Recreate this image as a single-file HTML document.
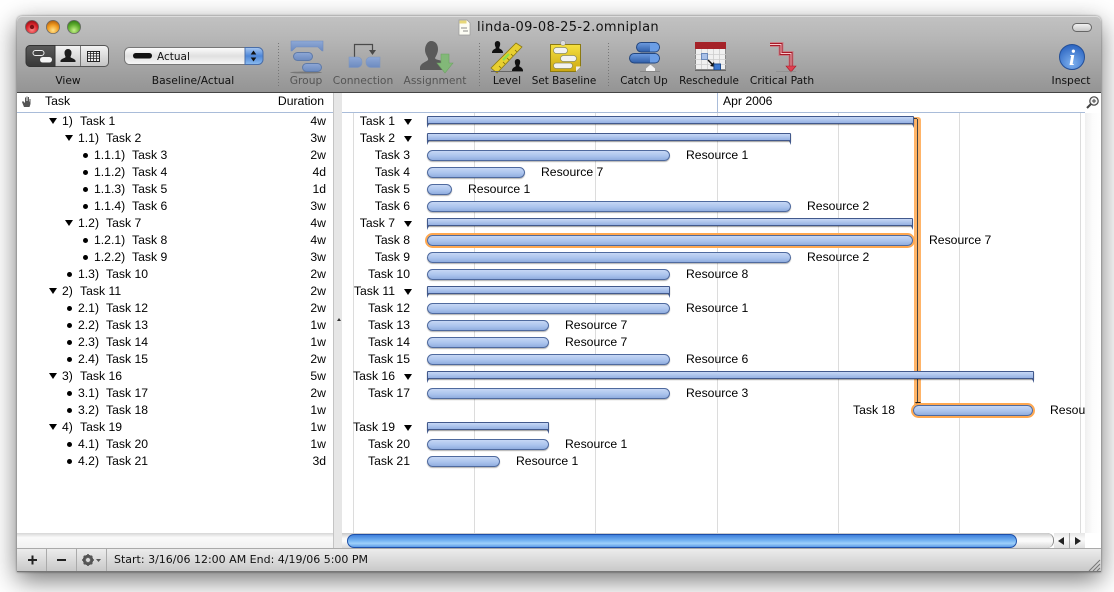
<!DOCTYPE html>
<html><head><meta charset="utf-8"><style>
html,body{margin:0;padding:0;width:1114px;height:592px;overflow:hidden;background:#fff}
body{position:relative;font-family:"Liberation Sans",sans-serif;font-size:12.2px;color:#000}
div,span{position:absolute;white-space:nowrap}
#win{left:17px;top:16px;width:1084px;height:556px;border-radius:5px 5px 0 0;box-shadow:0 8px 26px rgba(0,0,0,.55),0 0 2px rgba(0,0,0,.5)}
#tb{left:17px;top:16px;width:1084px;height:76px;background:linear-gradient(#c2c2c2,#b6b6b6 30%,#949494);border-radius:5px 5px 0 0;box-shadow:inset 0 1px 0 #ddd}
.tl{font-family:"DejaVu Sans",sans-serif;font-size:10.7px;height:12px;line-height:12px;top:75px;transform:translateX(-50%);color:#111}
.d{color:#555}
.n{font-size:10.4px}
#line{left:17px;top:92px;width:1084px;height:1px;background:#444}
#left{left:17px;top:93px;width:316px;height:440px;background:#fff}
#split{left:333px;top:93px;width:9px;height:455px;background:#e6e6e6;border-left:1px solid #c4c4c4;box-sizing:border-box}
#right{left:342px;top:93px;width:759px;height:440px;background:#fff;overflow:hidden}
.hl{top:112px;height:1px;background:#a9bcd9}
.v{top:113px;width:1px;height:420px;background:#dcdcdc}
.r{height:14px;line-height:14px}
.tr{width:0;height:0;border-left:4px solid transparent;border-right:4px solid transparent;border-top:6px solid #000;margin-top:1px}
.b{width:5px;height:5px;border-radius:50%;background:#000}
.dur{right:788px;text-align:right}
.lab{right:704px;text-align:right}
.bar{height:11px;box-sizing:border-box;border:1px solid #4f6a9e;border-radius:6px;background:linear-gradient(#c6d7f5,#a9c2ec 60%,#90addf);box-shadow:0 1px 1px rgba(0,0,0,.3)}
.g{height:8px;box-sizing:border-box;border:1px solid #42598c;border-radius:1px 1px 0 0;background:linear-gradient(#c6d7f5,#96b2e3);box-shadow:0 1px 1px rgba(0,0,0,.4)}
.cl,.cr{top:7px;width:0;height:0;border-top:4px solid #42598c}
.cl{left:-1px;border-right:2px solid transparent}
.cr{right:-1px;border-left:2px solid transparent}
.hi{box-shadow:0 0 0 2px #ffa850}
#sb{left:17px;top:533px;width:316px;height:15px;background:linear-gradient(#d6d6d6,#fafafa 30%,#f2f2f2)}
#st{left:17px;top:548px;width:1084px;height:24px;box-sizing:border-box;background:linear-gradient(#ececec,#c9c9c9);border-top:1px solid #aaa;border-bottom:1px solid #777}
.sep{top:549px;width:1px;height:22px;background:#aaa}
</style></head><body>
<div id="win"></div>
<div id="tb"></div>
<div id="line"></div>
<div id="left"></div>
<div id="right"></div>
<div id="split"></div>

<div style="left:477px;top:20px;height:15px;line-height:15px;font-family:'DejaVu Sans',sans-serif;font-size:13px;color:#111;letter-spacing:.36px">linda-09-08-25-2.omniplan</div>

<div class="tl" style="left:68px">View</div>
<div class="tl" style="left:193px">Baseline/Actual</div>
<div class="tl d" style="left:306px">Group</div>
<div class="tl d" style="left:363px">Connection</div>
<div class="tl d" style="left:435px">Assignment</div>
<div class="tl" style="left:507px">Level</div>
<div class="tl n" style="left:564px">Set Baseline</div>
<div class="tl n" style="left:644px">Catch Up</div>
<div class="tl n" style="left:709px">Reschedule</div>
<div class="tl" style="left:782px">Critical Path</div>
<div class="tl" style="left:1071px">Inspect</div>

<svg style="position:absolute;left:0;top:0" width="1114" height="93" viewBox="0 0 1114 93">
<defs>
<radialGradient id="red" cx=".5" cy=".7" r=".7"><stop offset="0" stop-color="#ff8a8a"/><stop offset=".6" stop-color="#d8222a"/><stop offset="1" stop-color="#8c1015"/></radialGradient>
<radialGradient id="yel" cx=".5" cy=".75" r=".7"><stop offset="0" stop-color="#ffe28a"/><stop offset=".6" stop-color="#f09a20"/><stop offset="1" stop-color="#b86510"/></radialGradient>
<radialGradient id="grn" cx=".5" cy=".75" r=".7"><stop offset="0" stop-color="#c6f08a"/><stop offset=".6" stop-color="#62b030"/><stop offset="1" stop-color="#37801a"/></radialGradient>
<linearGradient id="seg" x1="0" y1="0" x2="0" y2="1"><stop offset="0" stop-color="#f4f4f4"/><stop offset="1" stop-color="#c4c4c4"/></linearGradient>
<linearGradient id="segd" x1="0" y1="0" x2="0" y2="1"><stop offset="0" stop-color="#5a5a5a"/><stop offset="1" stop-color="#383838"/></linearGradient>
<linearGradient id="pop" x1="0" y1="0" x2="0" y2="1"><stop offset="0" stop-color="#fdfdfd"/><stop offset=".5" stop-color="#e0e0e0"/><stop offset="1" stop-color="#f8f8f8"/></linearGradient>
<linearGradient id="popb" x1="0" y1="0" x2="0" y2="1"><stop offset="0" stop-color="#a9c9f2"/><stop offset=".5" stop-color="#4d86d8"/><stop offset="1" stop-color="#8cbcf0"/></linearGradient>
<linearGradient id="gb" x1="0" y1="0" x2="0" y2="1"><stop offset="0" stop-color="#8ea8d6"/><stop offset="1" stop-color="#6c8ac0"/></linearGradient>
<linearGradient id="yl" x1="0" y1="0" x2="0" y2="1"><stop offset="0" stop-color="#f6e040"/><stop offset="1" stop-color="#cca812"/></linearGradient>
<linearGradient id="cu" x1="0" y1="0" x2="0" y2="1"><stop offset="0" stop-color="#6d9be0"/><stop offset="1" stop-color="#2f5ea8"/></linearGradient>
<radialGradient id="ib" cx=".5" cy=".75" r=".75"><stop offset="0" stop-color="#7fb2f0"/><stop offset="1" stop-color="#2a63c0"/></radialGradient>
</defs>
<circle cx="32" cy="27" r="6.600" fill="url(#red)" stroke="#6b6b6b" stroke-width=".8"/><circle cx="32" cy="27" r="2.200" fill="#7d1015"/>
<circle cx="53" cy="27" r="6.600" fill="url(#yel)" stroke="#6b6b6b" stroke-width=".8"/>
<circle cx="74" cy="27" r="6.600" fill="url(#grn)" stroke="#6b6b6b" stroke-width=".8"/>
<path d="M459 20h8l3 3v12h-11z" fill="#fdfdf4" stroke="#999" stroke-width=".7"/><rect x="459.500" y="20.500" width="7" height="3" fill="#e8d878"/><path d="M461 28h6M463 31h5" stroke="#666" stroke-width=".8"/>
<rect x="1072.500" y="23.500" width="19" height="8" rx="4" fill="url(#seg)" stroke="#666"/>
<rect x="26.500" y="45.500" width="82" height="21" rx="4" fill="url(#seg)" stroke="#555"/>
<path d="M55 45.500H30a4 4 0 0 0-4 4v13a4 4 0 0 0 4 4h25z" fill="url(#segd)" stroke="#333"/>
<path d="M80.500 46v20" stroke="#777"/>
<rect x="33" y="50.500" width="11" height="5" rx="2.500" fill="#444" stroke="#eee"/>
<rect x="40" y="57" width="12" height="5.500" rx="2.700" fill="#f4f4f4"/>
<path d="M68 49a3.500 3.500 0 0 1 3.500 4c0 2-1 3-1 4s4 1.500 5 3.500v1.500H60.500v-1.500c1-2 5-2.500 5-3.500s-1-2-1-4a3.500 3.500 0 0 1 3.500-4z" fill="#1c1c1c"/>
<rect x="87.500" y="51.500" width="12" height="10" fill="#f2f2f2" stroke="#222"/>
<path d="M87.500 53.500h12M87.500 56h12M87.500 58.500h12M90.500 51.500v10M93.500 51.500v10M96.500 51.500v10" stroke="#222" stroke-width=".8"/>
<rect x="124.500" y="47.500" width="138" height="17" rx="5" fill="url(#pop)" stroke="#777"/>
<path d="M245 47.500h13a5 5 0 0 1 5 5v7a5 5 0 0 1-5 5h-13z" fill="url(#popb)" stroke="#4a6ea8"/>
<path d="M253.500 50.500l-2.800 4h5.600zM253.500 61.500l-2.800-4h5.600z" fill="#111"/>
<rect x="133" y="53" width="19" height="5.500" rx="2.700" fill="#111"/>
<text x="157" y="60" font-family="'DejaVu Sans',sans-serif" font-size="10.500" fill="#111">Actual</text>
<path d="M278.500 43v43M479.500 43v43M608.500 43v43" stroke="#777" stroke-dasharray="1 2"/>
<ellipse cx="306" cy="72.500" rx="16" ry="1" fill="#777"/>
<path d="M291 41h32v10h-1l-4-4h-22l-4 4h-1z" fill="url(#gb)" stroke="#6f8cc0" stroke-width=".6"/>
<rect x="293.500" y="52.500" width="19" height="8" rx="4" fill="url(#gb)" stroke="#5f7aa8"/>
<rect x="302.500" y="63.500" width="19" height="8" rx="4" fill="url(#gb)" stroke="#5f7aa8"/>
<path d="M354.500 57V44.500H372.500V50" fill="none" stroke="#4a4a4a" stroke-width="1.200"/>
<path d="M369 50h7l-3.500 5z" fill="#4a4a4a"/>
<path d="M349 57h9a4.500 4.500 0 0 1 4 5a5 5 0 0 1-4 5.500h-9z" fill="url(#gb)" stroke="#7f96bd" stroke-width=".6"/>
<path d="M380 57h-9a4.500 4.500 0 0 0-5 5a5 5 0 0 0 5 5.500h9z" fill="url(#gb)" stroke="#7f96bd" stroke-width=".6"/>
<path d="M431 41c5 0 7 4 7 8s-2 7-3 9c0 2 6 2 10 4v8h-25v-3c1-4 6-5 8-7 1-2-3-5-3-10 0-5 3-9 6-9z" fill="#5a5a5a"/>
<path d="M441 54h8v9h4l-8 10-8-10h4z" fill="#82b878" stroke="#6da262" stroke-width=".6"/>
<path d="M491 68L516 43l6 4-25 26z" fill="#e8cf30" stroke="#8c7a10" stroke-width=".8"/>
<path d="M499 66l2 2M503 62l2 2M507 58l2 2M511 54l2 2M515 50l2 2" stroke="#7a6a10" stroke-width=".8"/>
<path d="M503 60l6-6" stroke="#8fe04a" stroke-width="2.500"/>
<path d="M497.500 41a2.700 2.700 0 0 1 2.700 3c0 2-1 3-1 4s3 1 3.800 4v1h-11v-1c.8-3 3.800-3 3.800-4s-1-2-1-4a2.700 2.700 0 0 1 2.700-3z" fill="#111"/>
<path d="M517.500 59a2.700 2.700 0 0 1 2.700 3c0 2-1 3-1 4s3 1 3.800 4v1h-11v-1c.8-3 3.800-3 3.800-4s-1-2-1-4a2.700 2.700 0 0 1 2.700-3z" fill="#111"/>
<path d="M491 71.500h32" stroke="#666" stroke-width="1"/>
<path d="M550.500 44.500h30v22l-5 5h-25z" fill="url(#yl)" stroke="#8c7a10"/>
<path d="M581 66.500l-5 5v-5z" fill="#eee"/>
<circle cx="563" cy="43" r="2.500" fill="#ddd" stroke="#888" stroke-width=".5"/>
<rect x="553.500" y="47.500" width="14" height="6" rx="3" fill="#f2f2f2" stroke="#8a8a60" stroke-width=".7"/>
<rect x="560.500" y="55.500" width="16" height="6" rx="3" fill="#f2f2f2" stroke="#8a8a60" stroke-width=".7"/>
<rect x="553.500" y="63" width="19" height="5.500" rx="2.700" fill="#f2f2f2" stroke="#8a8a60" stroke-width=".7"/>
<rect x="636.500" y="42.500" width="23" height="9.500" rx="4.700" fill="url(#cu)" stroke="#23467e"/>
<path d="M650 43h5a4 4 0 0 1 4 4.500 4 4 0 0 1-4 4h-5z" fill="#6b9ee6"/>
<rect x="629.500" y="53.500" width="30" height="9.500" rx="4.700" fill="url(#cu)" stroke="#23467e"/>
<path d="M650 54h5a4 4 0 0 1 4 4.500 4 4 0 0 1-4 4h-5z" fill="#6b9ee6"/>
<path d="M646 71v-2.500l4-3.500h1l4 3.500V71z" fill="#f4f4f4"/>
<path d="M640 71.500h20" stroke="#888"/>
<rect x="695.500" y="42.500" width="30" height="27" fill="#f0f0f0" stroke="#888"/>
<rect x="695" y="42" width="31" height="7" fill="#a52228"/>
<path d="M695 54.500h31M695 59.500h31M695 64.500h31M701.500 49v20M707.500 49v20M713.500 49v20M719.500 49v20" stroke="#ccc" stroke-width=".8"/>
<rect x="701.500" y="53.500" width="6" height="6" fill="#a8c0e8" stroke="#6a88b8"/>
<path d="M708 60l6 6" stroke="#111" stroke-width="1.500"/><path d="M715 67l-5-1 4-4z" fill="#111"/>
<rect x="714" y="64" width="6.500" height="6" fill="#3b78d0" stroke="#1f4c90"/>
<path d="M695 70.500h31" stroke="#666"/>
<path d="M770 44.500h11v9h10V68" fill="none" stroke="#e05060" stroke-opacity=".5" stroke-width="5"/>
<path d="M770 44.500h11v9h10V68" fill="none" stroke="#a81a28" stroke-width="3"/>
<path d="M770 44.500h11v9h10V67" fill="none" stroke="#f5c8cc" stroke-width="1"/>
<path d="M786 66h10l-5 6z" fill="#e04050" stroke="#a81a28" stroke-width=".6"/>
<path d="M776 71.500h20" stroke="#888" stroke-opacity=".6"/>
<circle cx="1072" cy="57" r="12.500" fill="url(#ib)" stroke="#234f98"/>
<text x="1072" y="65" text-anchor="middle" font-family="'Liberation Serif',serif" font-style="italic" font-weight="bold" font-size="22" fill="#fff">i</text>
</svg>

<svg style="position:absolute;left:21px;top:95px" width="13" height="13" viewBox="0 0 13 13"><path d="M3 12L1 7l1-1 2 2V2.500h1V6h.5V1.500h1V6H7V2h1v4.500h.5V4h1v5l-1 3z" fill="#555"/></svg>
<div class="r" style="left:45px;top:94px">Task</div>
<div class="r" style="right:790px;top:94px">Duration</div>
<div class="hl" style="left:17px;width:316px"></div>
<div class="hl" style="left:342px;width:743px"></div>
<div style="left:717px;top:93px;width:1px;height:19px;background:#a9bcd9"></div>
<div class="r" style="left:723px;top:94px">Apr 2006</div>
<svg style="position:absolute;left:1086px;top:95px" width="14" height="14" viewBox="0 0 14 14"><circle cx="8" cy="6" r="4.200" fill="#f4f4f4" stroke="#444" stroke-width="1.200"/><path d="M5 9l-4 4" stroke="#444" stroke-width="2"/><path d="M6 6h4M8 4v4" stroke="#444"/></svg>

<div class="v" style="left:353px"></div><div class="v" style="left:474px"></div><div class="v" style="left:595px"></div><div class="v" style="left:717px"></div><div class="v" style="left:838px"></div><div class="v" style="left:959px"></div><div class="v" style="left:1080px"></div>

<div class="tr" style="left:49px;top:117px"></div><div class="r" style="left:62px;top:114px">1)</div><div class="r" style="left:80px;top:114px">Task 1</div><div class="r dur" style="top:114px">4w</div>
<div class="tr" style="left:65px;top:134px"></div><div class="r" style="left:78px;top:131px">1.1)</div><div class="r" style="left:106px;top:131px">Task 2</div><div class="r dur" style="top:131px">3w</div>
<div class="b" style="left:83px;top:153px"></div><div class="r" style="left:94px;top:148px">1.1.1)</div><div class="r" style="left:132px;top:148px">Task 3</div><div class="r dur" style="top:148px">2w</div>
<div class="b" style="left:83px;top:170px"></div><div class="r" style="left:94px;top:165px">1.1.2)</div><div class="r" style="left:132px;top:165px">Task 4</div><div class="r dur" style="top:165px">4d</div>
<div class="b" style="left:83px;top:187px"></div><div class="r" style="left:94px;top:182px">1.1.3)</div><div class="r" style="left:132px;top:182px">Task 5</div><div class="r dur" style="top:182px">1d</div>
<div class="b" style="left:83px;top:204px"></div><div class="r" style="left:94px;top:199px">1.1.4)</div><div class="r" style="left:132px;top:199px">Task 6</div><div class="r dur" style="top:199px">3w</div>
<div class="tr" style="left:65px;top:219px"></div><div class="r" style="left:78px;top:216px">1.2)</div><div class="r" style="left:106px;top:216px">Task 7</div><div class="r dur" style="top:216px">4w</div>
<div class="b" style="left:83px;top:238px"></div><div class="r" style="left:94px;top:233px">1.2.1)</div><div class="r" style="left:132px;top:233px">Task 8</div><div class="r dur" style="top:233px">4w</div>
<div class="b" style="left:83px;top:255px"></div><div class="r" style="left:94px;top:250px">1.2.2)</div><div class="r" style="left:132px;top:250px">Task 9</div><div class="r dur" style="top:250px">3w</div>
<div class="b" style="left:67px;top:272px"></div><div class="r" style="left:78px;top:267px">1.3)</div><div class="r" style="left:106px;top:267px">Task 10</div><div class="r dur" style="top:267px">2w</div>
<div class="tr" style="left:49px;top:287px"></div><div class="r" style="left:62px;top:284px">2)</div><div class="r" style="left:80px;top:284px">Task 11</div><div class="r dur" style="top:284px">2w</div>
<div class="b" style="left:67px;top:306px"></div><div class="r" style="left:78px;top:301px">2.1)</div><div class="r" style="left:106px;top:301px">Task 12</div><div class="r dur" style="top:301px">2w</div>
<div class="b" style="left:67px;top:323px"></div><div class="r" style="left:78px;top:318px">2.2)</div><div class="r" style="left:106px;top:318px">Task 13</div><div class="r dur" style="top:318px">1w</div>
<div class="b" style="left:67px;top:340px"></div><div class="r" style="left:78px;top:335px">2.3)</div><div class="r" style="left:106px;top:335px">Task 14</div><div class="r dur" style="top:335px">1w</div>
<div class="b" style="left:67px;top:357px"></div><div class="r" style="left:78px;top:352px">2.4)</div><div class="r" style="left:106px;top:352px">Task 15</div><div class="r dur" style="top:352px">2w</div>
<div class="tr" style="left:49px;top:372px"></div><div class="r" style="left:62px;top:369px">3)</div><div class="r" style="left:80px;top:369px">Task 16</div><div class="r dur" style="top:369px">5w</div>
<div class="b" style="left:67px;top:391px"></div><div class="r" style="left:78px;top:386px">3.1)</div><div class="r" style="left:106px;top:386px">Task 17</div><div class="r dur" style="top:386px">2w</div>
<div class="b" style="left:67px;top:408px"></div><div class="r" style="left:78px;top:403px">3.2)</div><div class="r" style="left:106px;top:403px">Task 18</div><div class="r dur" style="top:403px">1w</div>
<div class="tr" style="left:49px;top:423px"></div><div class="r" style="left:62px;top:420px">4)</div><div class="r" style="left:80px;top:420px">Task 19</div><div class="r dur" style="top:420px">1w</div>
<div class="b" style="left:67px;top:442px"></div><div class="r" style="left:78px;top:437px">4.1)</div><div class="r" style="left:106px;top:437px">Task 20</div><div class="r dur" style="top:437px">1w</div>
<div class="b" style="left:67px;top:459px"></div><div class="r" style="left:78px;top:454px">4.2)</div><div class="r" style="left:106px;top:454px">Task 21</div><div class="r dur" style="top:454px">3d</div>

<div style="left:914px;top:117px;width:7px;height:288px;box-sizing:border-box;background:#ffb468;border-radius:0 3px 0 0"></div>
<div style="left:917px;top:119px;width:1px;height:283px;background:#444"></div>
<div style="left:914px;top:118px;width:3px;height:1px;background:#444"></div>
<div style="left:915px;top:402px;width:0;height:0;border-left:3px solid transparent;border-right:3px solid transparent;border-top:4px solid #222"></div>

<div class="r" style="right:719px;top:114px">Task 1</div><div class="tr" style="left:404px;top:118px"></div><div class="g" style="left:427px;top:116px;width:487px"><span class="cl"></span><span class="cr"></span></div>
<div class="r" style="right:719px;top:131px">Task 2</div><div class="tr" style="left:404px;top:135px"></div><div class="g" style="left:427px;top:133px;width:364px"><span class="cl"></span><span class="cr"></span></div>
<div class="r lab" style="top:148px">Task 3</div><div class="bar" style="left:427px;top:150px;width:243px"></div><div class="r" style="left:686px;top:148px">Resource 1</div>
<div class="r lab" style="top:165px">Task 4</div><div class="bar" style="left:427px;top:167px;width:98px"></div><div class="r" style="left:541px;top:165px">Resource 7</div>
<div class="r lab" style="top:182px">Task 5</div><div class="bar" style="left:427px;top:184px;width:25px"></div><div class="r" style="left:468px;top:182px">Resource 1</div>
<div class="r lab" style="top:199px">Task 6</div><div class="bar" style="left:427px;top:201px;width:364px"></div><div class="r" style="left:807px;top:199px">Resource 2</div>
<div class="r" style="right:719px;top:216px">Task 7</div><div class="tr" style="left:404px;top:220px"></div><div class="g" style="left:427px;top:218px;width:486px"><span class="cl"></span><span class="cr"></span></div>
<div class="r lab" style="top:233px">Task 8</div><div class="bar hi" style="left:427px;top:235px;width:486px"></div><div class="r" style="left:929px;top:233px">Resource 7</div>
<div class="r lab" style="top:250px">Task 9</div><div class="bar" style="left:427px;top:252px;width:364px"></div><div class="r" style="left:807px;top:250px">Resource 2</div>
<div class="r lab" style="top:267px">Task 10</div><div class="bar" style="left:427px;top:269px;width:243px"></div><div class="r" style="left:686px;top:267px">Resource 8</div>
<div class="r" style="right:719px;top:284px">Task 11</div><div class="tr" style="left:404px;top:288px"></div><div class="g" style="left:427px;top:286px;width:243px"><span class="cl"></span><span class="cr"></span></div>
<div class="r lab" style="top:301px">Task 12</div><div class="bar" style="left:427px;top:303px;width:243px"></div><div class="r" style="left:686px;top:301px">Resource 1</div>
<div class="r lab" style="top:318px">Task 13</div><div class="bar" style="left:427px;top:320px;width:122px"></div><div class="r" style="left:565px;top:318px">Resource 7</div>
<div class="r lab" style="top:335px">Task 14</div><div class="bar" style="left:427px;top:337px;width:122px"></div><div class="r" style="left:565px;top:335px">Resource 7</div>
<div class="r lab" style="top:352px">Task 15</div><div class="bar" style="left:427px;top:354px;width:243px"></div><div class="r" style="left:686px;top:352px">Resource 6</div>
<div class="r" style="right:719px;top:369px">Task 16</div><div class="tr" style="left:404px;top:373px"></div><div class="g" style="left:427px;top:371px;width:607px"><span class="cl"></span><span class="cr"></span></div>
<div class="r lab" style="top:386px">Task 17</div><div class="bar" style="left:427px;top:388px;width:243px"></div><div class="r" style="left:686px;top:386px">Resource 3</div>
<div class="r" style="right:219px;top:403px">Task 18</div><div class="bar hi" style="left:913px;top:405px;width:120px"></div><div style="left:1050px;top:403px;width:35px;height:14px;line-height:14px;overflow:hidden">Resource 7</div>
<div class="r" style="right:719px;top:420px">Task 19</div><div class="tr" style="left:404px;top:424px"></div><div class="g" style="left:427px;top:422px;width:122px"><span class="cl"></span><span class="cr"></span></div>
<div class="r lab" style="top:437px">Task 20</div><div class="bar" style="left:427px;top:439px;width:122px"></div><div class="r" style="left:565px;top:437px">Resource 1</div>
<div class="r lab" style="top:454px">Task 21</div><div class="bar" style="left:427px;top:456px;width:73px"></div><div class="r" style="left:516px;top:454px">Resource 1</div>

<div style="left:1085px;top:113px;width:16px;height:435px;background:linear-gradient(90deg,#f0f0f0,#fcfcfc 50%,#fff)"></div>
<div style="left:337px;top:318px;width:0;height:0;border-left:2px solid transparent;border-right:2px solid transparent;border-bottom:3px solid #333"></div>

<div id="sb"></div>
<div style="left:1054px;top:533px;width:31px;height:15px;background:linear-gradient(#e6e6e6,#fafafa 40%,#e0e0e0)"></div>
<div style="left:342px;top:533px;width:712px;height:15px;box-sizing:border-box;background:linear-gradient(#c8c8c8,#f8f8f8 35%,#fafafa 55%,#d8d8d8);border-right:1px solid #888;border-radius:0 7px 7px 0"></div>
<div style="left:347px;top:534px;width:670px;height:14px;box-sizing:border-box;border:1px solid #1d4fa8;border-radius:7px;background:linear-gradient(#3f80dc,#7ab8f4 50%,#9fd0fa 70%,#5a9ae8)"></div>
<div style="left:1069px;top:533px;width:1px;height:15px;background:#aaa"></div>
<div style="left:1058px;top:537px;width:0;height:0;border-top:4px solid transparent;border-bottom:4px solid transparent;border-right:6px solid #222"></div>
<div style="left:1075px;top:537px;width:0;height:0;border-top:4px solid transparent;border-bottom:4px solid transparent;border-left:6px solid #222"></div>
<div style="left:1085px;top:533px;width:16px;height:15px;background:#fff"></div>

<div id="st"></div>
<div class="sep" style="left:46px"></div><div class="sep" style="left:76px"></div><div class="sep" style="left:106px"></div>
<svg style="position:absolute;left:17px;top:549px" width="100" height="22" viewBox="0 0 100 22">
<path d="M11 11h9M15.500 6.500v9" stroke="#222" stroke-width="2"/>
<path d="M40 11h9" stroke="#222" stroke-width="2"/>
<circle cx="71" cy="11" r="4" fill="none" stroke="#555" stroke-width="2.500"/>
<path d="M71 5v12M65 11h12M66.800 6.800l8.400 8.400M75.200 6.800l-8.400 8.400" stroke="#555" stroke-width="1.600"/>
<circle cx="71" cy="11" r="2" fill="#ddd"/>
<path d="M79 10h5l-2.500 3z" fill="#555"/>
</svg>
<div style="left:114px;top:553px;height:14px;line-height:14px;font-family:'DejaVu Sans',sans-serif;font-size:11px;color:#111">Start: 3/16/06 12:00 AM End: 4/19/06 5:00 PM</div>
<svg style="position:absolute;left:1087px;top:558px" width="14" height="14" viewBox="0 0 14 14"><path d="M2 13L13 2M6 13l7-7M10 13l3-3" stroke="#777" stroke-width="1"/></svg>
</body></html>
